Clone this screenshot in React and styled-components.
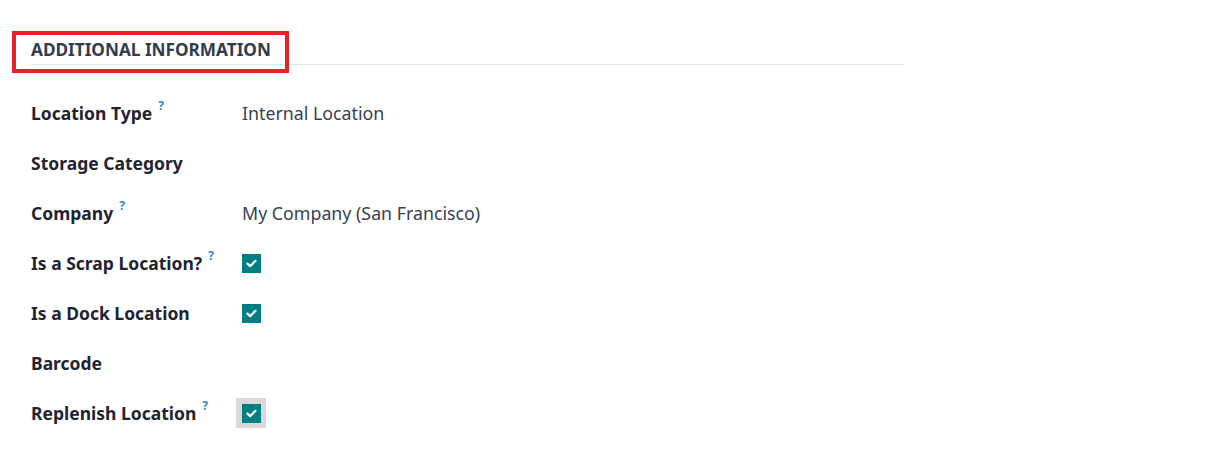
import React from 'react';
import styled, { createGlobalStyle } from 'styled-components';

const GlobalStyle = createGlobalStyle`
  body {
    margin: 0;
    background: #ffffff;
    font-family: "Noto Sans", "Open Sans", sans-serif;
  }
`;

const Page = styled.div`
  width: 1212px;
  height: 453px;
  padding: 38px 0 0 31px;
  box-sizing: border-box;
  background: #ffffff;
`;

const Section = styled.div`
  width: 873px;
`;

const HeadingWrap = styled.div`
  position: relative;
  border-bottom: 1px solid #e2e4e8;
  padding-bottom: 2px;
  margin-bottom: 23px;
`;

const Heading = styled.h4`
  margin: 0;
  font-size: 17.2px;
  font-weight: 700;
  line-height: 24px;
  color: #313d4f;
  text-transform: uppercase;
`;

const Highlight = styled.div`
  position: absolute;
  left: -19px;
  top: -7px;
  width: 277px;
  height: 42px;
  border: 4px solid #e8202a;
  box-sizing: border-box;
  pointer-events: none;
`;

const Grid = styled.div`
  display: grid;
  grid-template-columns: 211px 1fr;
  grid-auto-rows: 50px;
  align-items: center;
`;

const Label = styled.div`
  font-size: 17.5px;
  font-weight: 700;
  color: #1f2430;
  display: flex;
  align-items: flex-start;
`;

const Help = styled.sup`
  font-size: 12px;
  font-weight: 700;
  color: #2a8bc4;
  margin-left: 6px;
  position: relative;
  top: -4px;
  vertical-align: baseline;
`;

const Value = styled.div`
  font-size: 17.8px;
  color: #374151;
`;

const CheckWrap = styled.div`
  width: 30px;
  height: 30px;
  margin-left: -6px;
  display: flex;
  align-items: center;
  justify-content: center;
  background: ${p => (p.focused ? '#ddd6dc' : 'transparent')};
`;

const Box = styled.div`
  width: 19px;
  height: 19px;
  background: #017e84;
  display: flex;
  align-items: center;
  justify-content: center;
`;

const Check = () => (
  <svg width="11" height="9" viewBox="0 0 11 9">
    <path d="M1.5 4.6 L4.2 7.1 L9.5 1.8" fill="none" stroke="#fff" strokeWidth="2.2" strokeLinecap="round" strokeLinejoin="round" />
  </svg>
);

const Checkbox = ({ focused }) => (
  <CheckWrap focused={focused}>
    <Box>
      <Check />
    </Box>
  </CheckWrap>
);

const rows = [
  { label: 'Location Type', help: true, value: 'Internal Location' },
  { label: 'Storage Category' },
  { label: 'Company', help: true, value: 'My Company (San Francisco)' },
  { label: 'Is a Scrap Location?', help: true, check: true },
  { label: 'Is a Dock Location', check: true },
  { label: 'Barcode' },
  { label: 'Replenish Location', help: true, check: true, focused: true },
];

export default function App() {
  return (
    <Page>
      <GlobalStyle />
      <Section>
        <HeadingWrap>
          <Heading>Additional Information</Heading>
          <Highlight />
        </HeadingWrap>
        <Grid>
          {rows.map(r => (
            <React.Fragment key={r.label}>
              <Label>
                {r.label}
                {r.help && <Help>?</Help>}
              </Label>
              <div>
                {r.value && <Value>{r.value}</Value>}
                {r.check && <Checkbox focused={r.focused} />}
              </div>
            </React.Fragment>
          ))}
        </Grid>
      </Section>
    </Page>
  );
}
